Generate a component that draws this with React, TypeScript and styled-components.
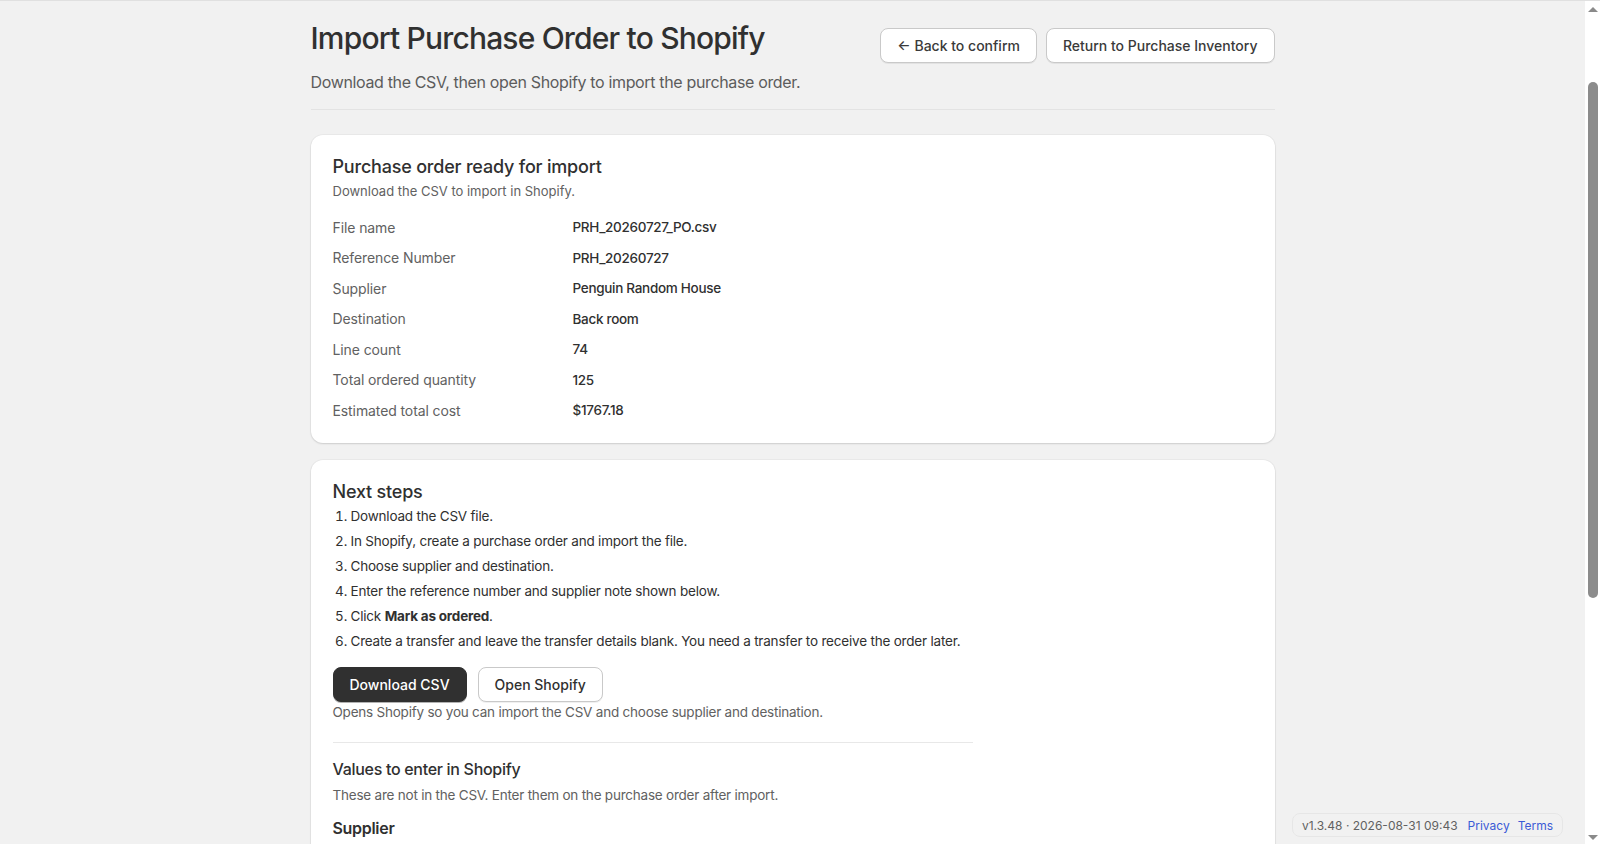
import React from "react";
import styled, { createGlobalStyle } from "styled-components";

const GlobalStyle = createGlobalStyle`
  html, body {
    margin: 0;
    padding: 0;
    background: #f1f1f1;
  }
  body {
    font-family: Inter, "Noto Sans", "Liberation Sans", sans-serif;
    color: #303030;
    -webkit-font-smoothing: antialiased;
  }
  * { box-sizing: border-box; }
`;

const Page = styled.div`
  border-top: 1px solid #e0e0e0;
  padding: 18px 15px 120px 0;
`;

const Container = styled.main`
  width: 964px;
  margin: 0 auto;
`;

const Header = styled.header`
  display: flex;
  justify-content: space-between;
  align-items: flex-start;
  padding-bottom: 16px;
  border-bottom: 1px solid #e3e3e3;
  margin-bottom: 25px;
`;

const HeaderText = styled.div`
  display: flex;
  flex-direction: column;
  gap: 14px;
`;

const Title = styled.h1`
  margin: 0;
  font-size: 30px;
  line-height: 38px;
  font-weight: 500;
  letter-spacing: -0.82px;
  color: #303030;
`;

const Subtitle = styled.p`
  margin: 0;
  font-size: 16px;
  line-height: 22px;
  letter-spacing: -0.35px;
  color: #5c5c5c;
`;

const HeaderActions = styled.div`
  display: flex;
  gap: 9px;
  padding-top: 9px;
`;

const Button = styled.button<{ $primary?: boolean }>`
  height: 35px;
  padding: 0 16px;
  border-radius: 8px;
  font-family: inherit;
  font-size: 14px;
  font-weight: 500;
  cursor: pointer;
  border: 1px solid ${(p) => (p.$primary ? "#303030" : "#c9c9c9")};
  background: ${(p) => (p.$primary ? "#303030" : "#ffffff")};
  color: ${(p) => (p.$primary ? "#ffffff" : "#303030")};
  box-shadow: ${(p) => (p.$primary ? "0 1px 0 rgba(0,0,0,0.3)" : "0 1px 0 rgba(0,0,0,0.06)")};
`;

const HeaderButton = styled(Button)`
  color: #3a3a3a;
`;

const Card = styled.section`
  background: #ffffff;
  border-radius: 12px;
  box-shadow: 0 1px 2px rgba(0, 0, 0, 0.12), 0 0 0 1px rgba(0, 0, 0, 0.03);
  padding: 20px 22px 17px;
  margin-bottom: 17px;
`;

const CardTitle = styled.h2`
  margin: 0;
  font-size: 18px;
  line-height: 24px;
  font-weight: 500;
  letter-spacing: -0.2px;
  color: #303030;
`;

const CardSub = styled.p`
  margin: 2px 0 0;
  font-size: 13px;
  line-height: 20px;
  color: #616161;
`;

const DetailGrid = styled.dl`
  display: grid;
  grid-template-columns: 240px 1fr;
  grid-auto-rows: 30.5px;
  margin: 11px 0 0;
  align-items: center;
`;

const DetailLabel = styled.dt`
  font-size: 14px;
  letter-spacing: -0.1px;
  color: #616161;
`;

const DetailValue = styled.dd`
  margin: 0;
  font-size: 13.5px;
  font-weight: 450;
  letter-spacing: -0.3px;
  color: #303030;
`;

const StepsWrap = styled.div`
  max-width: 640px;
`;

const Steps = styled.ol`
  margin: 0;
  padding-left: 18px;
  font-size: 13.5px;
  letter-spacing: -0.2px;
  color: #303030;
`;

const Step = styled.li`
  line-height: 25px;
`;

const ButtonRow = styled.div`
  display: flex;
  gap: 11px;
  margin-top: 13px;
`;

const Helper = styled.p`
  margin: 0;
  font-size: 13.5px;
  line-height: 20px;
  letter-spacing: -0.22px;
  color: #616161;
`;

const Divider = styled.hr`
  border: none;
  border-top: 1px solid #e8e8e8;
  margin: 20px 0 14px;
`;

const SectionTitle = styled.h3`
  margin: 0;
  font-size: 16px;
  line-height: 24px;
  font-weight: 500;
  letter-spacing: -0.3px;
  color: #303030;
`;

const SectionSub = styled.p`
  margin: 4px 0 0;
  font-size: 13.5px;
  line-height: 20px;
  letter-spacing: -0.22px;
  color: #616161;
`;

const FieldLabel = styled.h4`
  margin: 11px 0 4px;
  font-size: 16px;
  line-height: 24px;
  font-weight: 600;
  letter-spacing: -0.3px;
  color: #303030;
`;

const FieldBox = styled.div`
  display: flex;
  align-items: center;
  justify-content: space-between;
  border: 1px solid #e3e3e3;
  border-radius: 8px;
  padding: 10px 12px;
  font-size: 14px;
  color: #303030;
  background: #fafafa;
`;

const CopyButton = styled.button`
  height: 28px;
  padding: 0 12px;
  border: 1px solid #c9c9c9;
  border-radius: 8px;
  background: #fff;
  font-family: inherit;
  font-size: 13px;
  font-weight: 500;
  color: #303030;
`;

const Footer = styled.div`
  position: fixed;
  right: 37px;
  bottom: 7px;
  display: flex;
  align-items: center;
  gap: 10px;
  height: 24px;
  padding: 0 9px;
  border: 1px solid #e6e6e6;
  border-radius: 8px;
  background: #f1f1f1;
  font-size: 12px;
  color: #616161;
`;

const FooterLink = styled.a<{ $first?: boolean }>`
  color: #3b5bd6;
  text-decoration: none;
  margin-left: ${(p) => (p.$first ? "0" : "-2px")};
`;

/* Visual stand-in for the window scrollbar shown in the screenshot */
const ScrollTrack = styled.div`
  position: fixed;
  top: 1px;
  right: 0;
  bottom: 0;
  width: 15px;
  background: #ffffff;
  display: flex;
  flex-direction: column;
  align-items: center;
  justify-content: space-between;
  padding: 6px 0 4px;
`;

const ScrollArrow = styled.div<{ $down?: boolean }>`
  width: 0;
  height: 0;
  border-left: 5px solid transparent;
  border-right: 5px solid transparent;
  ${(p) =>
    p.$down ? "border-top: 5px solid #8a8a8a;" : "border-bottom: 5px solid #8a8a8a;"}
`;

const ScrollThumb = styled.div`
  position: absolute;
  top: 81px;
  left: 3px;
  width: 10px;
  height: 516px;
  border-radius: 5px;
  background: #8c8c8c;
`;

const details: [string, string][] = [
  ["File name", "PRH_20260727_PO.csv"],
  ["Reference Number", "PRH_20260727"],
  ["Supplier", "Penguin Random House"],
  ["Destination", "Back room"],
  ["Line count", "74"],
  ["Total ordered quantity", "125"],
  ["Estimated total cost", "$1767.18"],
];

const fields: [string, string][] = [
  ["Supplier", "Penguin Random House"],
  ["Reference number", "PRH_20260727"],
  ["Supplier note", "PRH weekly order · 74 lines · 125 units"],
];

export default function App() {
  return (
    <>
      <GlobalStyle />
      <Page>
        <Container>
          <Header>
            <HeaderText>
              <Title>Import Purchase Order to Shopify</Title>
              <Subtitle>Download the CSV, then open Shopify to import the purchase order.</Subtitle>
            </HeaderText>
            <HeaderActions>
              <HeaderButton>← Back to confirm</HeaderButton>
              <HeaderButton>Return to Purchase Inventory</HeaderButton>
            </HeaderActions>
          </Header>

          <Card>
            <CardTitle>Purchase order ready for import</CardTitle>
            <CardSub>Download the CSV to import in Shopify.</CardSub>
            <DetailGrid>
              {details.map(([k, v]) => (
                <React.Fragment key={k}>
                  <DetailLabel>{k}</DetailLabel>
                  <DetailValue>{v}</DetailValue>
                </React.Fragment>
              ))}
            </DetailGrid>
          </Card>

          <Card>
            <CardTitle>Next steps</CardTitle>
            <StepsWrap>
              <Steps>
                <Step>Download the CSV file.</Step>
                <Step>In Shopify, create a purchase order and import the file.</Step>
                <Step>Choose supplier and destination.</Step>
                <Step>Enter the reference number and supplier note shown below.</Step>
                <Step>
                  Click <strong>Mark as ordered</strong>.
                </Step>
                <Step>
                  Create a transfer and leave the transfer details blank. You need a transfer to receive the order later.
                </Step>
              </Steps>
              <ButtonRow>
                <Button $primary>Download CSV</Button>
                <Button>Open Shopify</Button>
              </ButtonRow>
              <Helper>Opens Shopify so you can import the CSV and choose supplier and destination.</Helper>
              <Divider />
              <SectionTitle>Values to enter in Shopify</SectionTitle>
              <SectionSub>These are not in the CSV. Enter them on the purchase order after import.</SectionSub>
              {fields.map(([k, v]) => (
                <React.Fragment key={k}>
                  <FieldLabel>{k}</FieldLabel>
                  <FieldBox>
                    <span>{v}</span>
                    <CopyButton>Copy</CopyButton>
                  </FieldBox>
                </React.Fragment>
              ))}
            </StepsWrap>
          </Card>
        </Container>
        <Footer>
          <span>v1.3.48 · 2026-08-31 09:43</span>
          <FooterLink $first href="#">Privacy</FooterLink>
          <FooterLink href="#">Terms</FooterLink>
        </Footer>
        <ScrollTrack aria-hidden="true">
          <ScrollArrow />
          <ScrollThumb />
          <ScrollArrow $down />
        </ScrollTrack>
      </Page>
    </>
  );
}
